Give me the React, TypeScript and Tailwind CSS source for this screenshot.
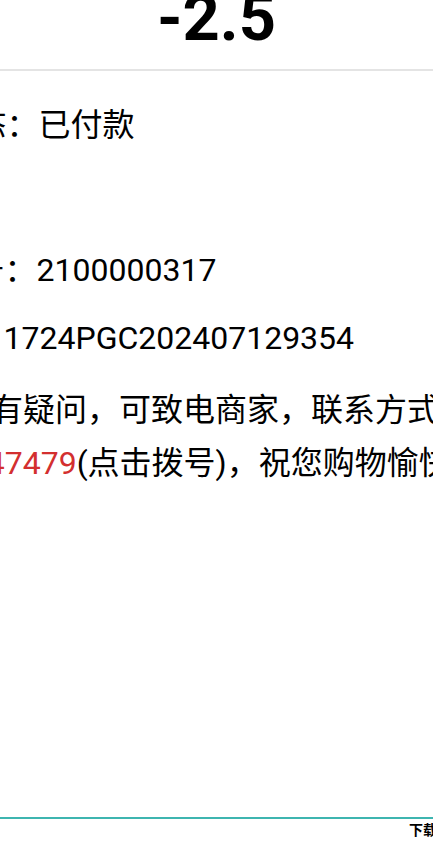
import React from "react";

export default function App() {
  return (
    <div
      className="w-[433px] h-[865px] overflow-hidden bg-white text-black flex flex-col"
      style={{ fontFamily: "Roboto, 'Noto Sans CJK SC', sans-serif" }}
    >
      <div className="h-[71px] shrink-0 border-b-2 border-[#e4e4e4] flex justify-center">
        <div className="mt-[-15.5px] text-[65px] leading-[66px] font-bold whitespace-nowrap">
          -2.5
        </div>
      </div>

      <div className="flex flex-col text-[32px] leading-[52px] whitespace-nowrap">
        <div className="mt-[28px] h-[52px] ml-[-25.5px]">态：已付款</div>
        <div className="mt-[93px] h-[52px] ml-[-27.4px]">号：2100000317</div>
        <div className="mt-[16px] h-[52px] ml-[3.5px]">1724PGC202407129354</div>
        <div className="mt-[20px] h-[52px] ml-[-9px]">有疑问，可致电商家，联系方式：</div>
        <div className="mt-[1px] h-[52px] ml-[-13.3px]">
          <span className="text-[#d32f2f]">47479</span>(点击拨号)，祝您购物愉快！
        </div>
      </div>

      <div className="mt-auto h-[48px] shrink-0 border-t-2 border-[#3db5b0]">
        <div
          className="pl-[409px] text-[14px] leading-[20px] font-bold whitespace-nowrap"
          style={{ fontFamily: "'Noto Sans CJK SC', sans-serif" }}
        >
          下载APP
        </div>
      </div>
    </div>
  );
}
